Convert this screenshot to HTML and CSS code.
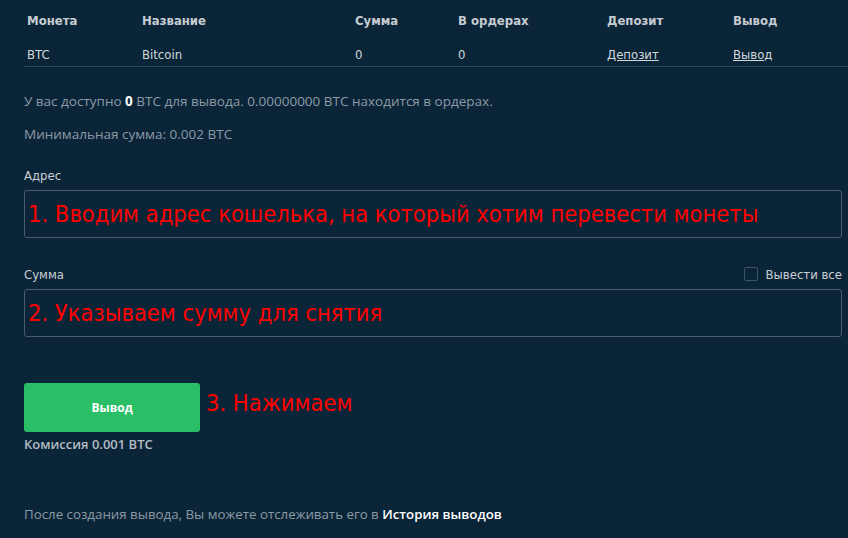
FILE: index.html
```html
<!DOCTYPE html>
<html lang="ru">
<head>
    <meta charset="UTF-8">
    <title>Вывод BTC</title>
    <link rel="stylesheet" href="styles.css">
</head>
<body>
    <div class="page">
        <div class="coins">
            <div class="coins-row coins-head">
                <div>Монета</div>
                <div>Название</div>
                <div>Сумма</div>
                <div>В ордерах</div>
                <div>Депозит</div>
                <div>Вывод</div>
            </div>
            <div class="coins-row">
                <div>BTC</div>
                <div>Bitcoin</div>
                <div>0</div>
                <div>0</div>
                <div><a href="#">Депозит</a></div>
                <div><a href="#">Вывод</a></div>
            </div>
        </div>

        <p class="info">У вас доступно <b>0</b> BTC для вывода. 0.00000000 BTC находится в ордерах.</p>
        <p class="info">Минимальная сумма: 0.002 BTC</p>

        <div class="field">
            <div class="field-top">
                <label>Адрес</label>
            </div>
            <div class="input-box"><span class="hint">1. Вводим адрес кошелька, на который хотим перевести монеты</span></div>
        </div>

        <div class="field">
            <div class="field-top">
                <label>Сумма</label>
                <span class="check"><span class="check-box"></span>Вывести все</span>
            </div>
            <div class="input-box"><span class="hint">2. Указываем сумму для снятия</span></div>
        </div>

        <div class="submit">
            <button class="btn">Вывод</button>
            <span class="hint">3. Нажимаем</span>
        </div>
        <div class="fee">Комиссия 0.001 BTC</div>

        <p class="note">После создания вывода, Вы можете отслеживать его в <b>История выводов</b></p>
    </div>
</body>
</html>
```

FILE: styles.css
```css
body {
    margin: 0;
    background-color: #0b2538;
    font-family: "Open Sans", Arial, sans-serif;
    color: #8c9aa5;
}
.page {
    padding: 0 6px 0 24px;
}
.coins {
    margin-right: -6px;
    font-family: "DejaVu Sans Condensed", "Liberation Sans Narrow", sans-serif;
    font-size: 13px;
    color: #d2d7dc;
}
.coins-row {
    display: grid;
    grid-template-columns: 115px 213px 103px 149px 126px 1fr;
    padding-left: 3px;
}
.coins-head {
    font-weight: bold;
    color: #c5ccd2;
    height: 40px;
    align-items: center;
}
.coins-row:not(.coins-head) {
    height: 24px;
    padding-top: 2px;
    align-items: center;
    border-bottom: 1px solid #2b4457;
}
.coins a {
    color: #d2d7dc;
    text-decoration: underline;
}
.info {
    margin: 0;
    font-size: 13.5px;
    line-height: 16px;
}
.info:first-of-type {
    margin-top: 26px;
}
.info + .info {
    margin-top: 17px;
}
.info b {
    color: #fff;
}
.field {
    margin-top: 24px;
}
.field + .field {
    margin-top: 27px;
}
.field-top {
    display: flex;
    justify-content: space-between;
    align-items: center;
    height: 18px;
    margin-bottom: 6px;
}
.field-top label {
    font-family: "DejaVu Sans Condensed", "Liberation Sans Narrow", sans-serif;
    font-size: 13px;
    color: #c9cfd4;
}
.check {
    display: flex;
    align-items: center;
    gap: 8px;
    font-family: "DejaVu Sans Condensed", "Liberation Sans Narrow", sans-serif;
    font-size: 13px;
    color: #c9cfd4;
}
.check-box {
    width: 12px;
    height: 12px;
    border: 1px solid #3d5263;
    border-radius: 2px;
}
.input-box {
    height: 46px;
    border: 1px solid #4b5d6c;
    border-radius: 3px;
    display: flex;
    align-items: center;
    padding-left: 3px;
}
.hint {
    font-family: "DejaVu Sans Condensed", "Liberation Sans Narrow", sans-serif;
    font-size: 23.5px;
    color: #ff0000;
}
.submit {
    margin-top: 46px;
    display: flex;
    align-items: flex-start;
    gap: 6px;
}
.submit .hint {
    margin-top: 6px;
}
.btn {
    width: 176px;
    height: 49px;
    background-color: #2abf66;
    color: #fff;
    border: none;
    border-radius: 3px;
    font-family: "Open Sans", Arial, sans-serif;
    font-weight: bold;
    font-size: 12px;
}
.fee {
    margin-top: 3px;
    font-size: 13px;
    font-weight: 600;
    color: #b3bcc3;
}
.note {
    margin: 52px 0 0;
    font-size: 13.3px;
}
.note b {
    color: #fff;
    font-weight: 600;
}
```
